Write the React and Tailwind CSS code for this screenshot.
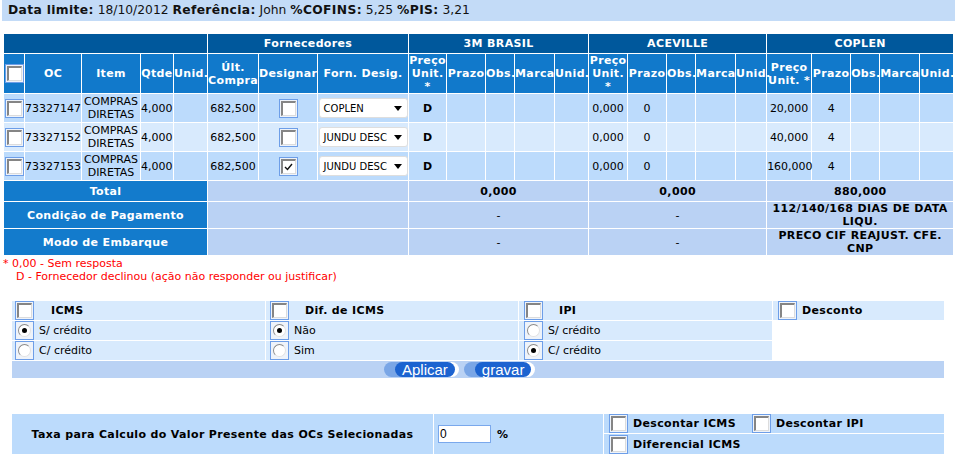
import React from 'react';

const COLS = [21, 57, 59, 33, 34, 51, 59, 91, 38, 39, 29, 40, 34, 39, 39, 29, 40, 31, 45, 39, 29, 40, 34];

const ROWS = [
  { oc: '73327147', forn: 'COPLEN', designar: false, ace: '0,000', cop: '20,000', bg: 'bg-[#bcdbfc]' },
  { oc: '73327152', forn: 'JUNDU DESC', designar: false, ace: '0,000', cop: '40,000', bg: 'bg-[#d8eafd]' },
  { oc: '73327153', forn: 'JUNDU DESC', designar: true, ace: '0,000', cop: '160,000', bg: 'bg-[#bcdbfc]' },
];

const DOTS = 'bg-[#b8d2f4] bg-[conic-gradient(#a9c6ef_25%,#cadef8_0_50%,#a9c6ef_0_75%,#cadef8_0)] bg-[length:2px_2px]';

function Check({ checked }) {
  return (
    <span className="inline-flex w-[19px] h-[19px] shrink-0 items-center justify-center border border-[#6d9ee8] bg-[#eef3fa] align-middle">
      <span className="flex w-[15px] h-[15px] items-center justify-center bg-white border-t-2 border-l-2 border-r border-b border-t-[#858585] border-l-[#858585] border-r-[#dcdcdc] border-b-[#dcdcdc]">
        {checked && (
          <svg width="9" height="8" viewBox="0 0 9 8">
            <path d="M1 4 L3.5 6.5 L8 1" fill="none" stroke="#111" strokeWidth="1.4" />
          </svg>
        )}
      </span>
    </span>
  );
}

function Radio({ checked }) {
  return (
    <span className="inline-flex w-[19px] h-[19px] shrink-0 items-center justify-center border border-[#6d9ee8] bg-[#eef3fa] align-middle">
      <span className="flex w-[13px] h-[13px] items-center justify-center rounded-full bg-white border border-t-[#8a8a8a] border-l-[#8a8a8a] border-r-[#e2e2e2] border-b-[#e2e2e2]">
        {checked && <span className="w-[5px] h-[5px] rounded-full bg-black" />}
      </span>
    </span>
  );
}

function FakeSelect({ value }) {
  return (
    <div className="mx-auto flex w-[89px] h-[20px] items-center justify-between rounded-[3px] border border-[#dedede] bg-white pl-[4px] pr-[5px] text-[10px] text-black">
      <span>{value}</span>
      <svg width="8" height="5" viewBox="0 0 8 5"><path d="M0 0 H8 L4 5 Z" fill="#000" /></svg>
    </div>
  );
}

function Pill({ label }) {
  return (
    <span className="inline-flex h-[15px] items-center rounded-full bg-[linear-gradient(90deg,#7aa6e6_55%,#ffffff_55%)] pl-[11px] pr-[4px]">
      <span className="flex h-[15px] items-center rounded-full bg-[#1c63d0] px-[7px] font-['Liberation_Sans',Arial,sans-serif] text-[15px] leading-[15px] text-white">
        {label}
      </span>
    </span>
  );
}

export default function App() {
  const th2 = 'border border-white bg-[#1179cb] text-white font-bold tracking-[0.35px] text-center align-middle p-0 leading-[13px]';
  const td = 'border border-white p-0 align-middle';
  const B = 'font-bold tracking-[0.35px]';
  return (
    <div className="min-h-[458px] bg-white font-['DejaVu_Sans',Verdana,sans-serif] text-[11px] leading-[13px] text-black">
      <div className="ml-[2px] flex h-[21px] w-[953px] items-center bg-[#c3dbf7] pl-[6px] text-[12.3px] text-[#111]">
        <span>
          <span className={B}>Data limite:</span> 18/10/2012 <span className={B}>Referência:</span> John <span className={B}>%COFINS:</span> 5,25 <span className={B}>%PIS:</span> 3,21
        </span>
      </div>

      <table className="ml-[3px] mt-[12px] w-[950px] table-fixed border-collapse">
        <colgroup>
          {COLS.map((w, i) => <col key={i} style={{ width: w }} />)}
        </colgroup>
        <thead>
          <tr className="h-[20px] bg-[#00589c] text-white font-bold tracking-[0.35px]">
            <th colSpan={5} className="border border-white" />
            <th colSpan={3} className="border border-white text-center">Fornecedores</th>
            <th colSpan={5} className="border border-white text-center">3M BRASIL</th>
            <th colSpan={5} className="border border-white text-center">ACEVILLE</th>
            <th colSpan={5} className="border border-white text-center">COPLEN</th>
          </tr>
          <tr className="h-[40px]">
            <th className={th2}><Check /></th>
            <th className={th2}>OC</th>
            <th className={th2}>Item</th>
            <th className={th2}>Qtde</th>
            <th className={th2}>Unid.</th>
            <th className={th2}>Últ.<br />Compra</th>
            <th className={th2}>Designar</th>
            <th className={th2}>Forn. Desig.</th>
            {['3m', 'ace'].map(g => (
              <React.Fragment key={g}>
                <th className={th2}>Preço<br />Unit.<br />*</th>
                <th className={th2}>Prazo</th>
                <th className={th2}>Obs.</th>
                <th className={th2}>Marca</th>
                <th className={th2}>Unid.</th>
              </React.Fragment>
            ))}
            <th className={th2}>Preço<br />Unit. *</th>
            <th className={th2}>Prazo</th>
            <th className={th2}>Obs.</th>
            <th className={th2}>Marca</th>
            <th className={th2}>Unid.</th>
          </tr>
        </thead>
        <tbody>
          {ROWS.map(r => (
            <tr key={r.oc} className={`h-[29px] ${r.bg}`}>
              <td className={`${td} text-center`}><Check /></td>
              <td className={`${td} text-left`}>{r.oc}</td>
              <td className={`${td} text-center`}>COMPRAS<br />DIRETAS</td>
              <td className={`${td} text-left`}>4,000</td>
              <td className={td} />
              <td className={`${td} text-center`}>682,500</td>
              <td className={`${td} text-center`}><Check checked={r.designar} /></td>
              <td className={td}><FakeSelect value={r.forn} /></td>
              <td className={`${td} text-center font-bold`}>D</td>
              <td className={td} />
              <td className={td} />
              <td className={td} />
              <td className={td} />
              <td className={`${td} text-center`}>{r.ace}</td>
              <td className={`${td} text-center`}>0</td>
              <td className={td} />
              <td className={td} />
              <td className={td} />
              <td className={`${td} text-center`}>{r.cop}</td>
              <td className={`${td} text-center`}>4</td>
              <td className={td} />
              <td className={td} />
              <td className={td} />
            </tr>
          ))}
          <tr className="h-[21px] font-bold tracking-[0.35px]">
            <td colSpan={5} className={`${td} bg-[#137bcc] text-center text-white`}>Total</td>
            <td colSpan={3} className={`${td} ${DOTS}`} />
            <td colSpan={5} className={`${td} ${DOTS} text-center`}>0,000</td>
            <td colSpan={5} className={`${td} ${DOTS} text-center`}>0,000</td>
            <td colSpan={5} className={`${td} ${DOTS} text-center`}>880,000</td>
          </tr>
          <tr className="h-[27px] font-bold tracking-[0.35px]">
            <td colSpan={5} className={`${td} bg-[#137bcc] text-center text-white`}>Condição de Pagamento</td>
            <td colSpan={3} className={`${td} ${DOTS}`} />
            <td colSpan={5} className={`${td} ${DOTS} text-center font-normal`}>-</td>
            <td colSpan={5} className={`${td} ${DOTS} text-center font-normal`}>-</td>
            <td colSpan={5} className={`${td} ${DOTS} text-center`}>112/140/168 DIAS DE DATA LIQU.</td>
          </tr>
          <tr className="h-[27px] font-bold tracking-[0.35px]">
            <td colSpan={5} className={`${td} bg-[#137bcc] text-center text-white`}>Modo de Embarque</td>
            <td colSpan={3} className={`${td} ${DOTS}`} />
            <td colSpan={5} className={`${td} ${DOTS} text-center font-normal`}>-</td>
            <td colSpan={5} className={`${td} ${DOTS} text-center font-normal`}>-</td>
            <td colSpan={5} className={`${td} ${DOTS} text-center`}>PRECO CIF REAJUST. CFE. CNP</td>
          </tr>
        </tbody>
      </table>

      <div className="ml-[3px] mt-[1px] text-[#ff0000]">
        <p>* 0,00 - Sem resposta</p>
        <p className="pl-[13px]">D - Fornecedor declinou (ação não responder ou justificar)</p>
      </div>

      {/* Impostos */}
      <table className="ml-[11px] mt-[17px] w-[933px] table-fixed border-collapse">
        <colgroup>
          <col style={{ width: 254 }} />
          <col style={{ width: 253 }} />
          <col style={{ width: 254 }} />
          <col style={{ width: 172 }} />
        </colgroup>
        <tbody>
          <tr className="h-[18px] bg-[#d8eafd] font-bold tracking-[0.35px]">
            <td className={td}><div className="flex items-center pl-[3px]"><Check /><span className="ml-[17px]">ICMS</span></div></td>
            <td className={td}><div className="flex items-center pl-[4px]"><Check /><span className="ml-[16px]">Dif. de ICMS</span></div></td>
            <td className={td}><div className="flex items-center pl-[5px]"><Check /><span className="ml-[16px]">IPI</span></div></td>
            <td className={td}><div className="flex items-center pl-[5px]"><Check /><span className="ml-[5px]">Desconto</span></div></td>
          </tr>
          <tr className="h-[19px]">
            <td className={`${td} bg-[#d8eafd]`}><div className="flex items-center pl-[3px]"><Radio checked /><span className="ml-[5px]">S/ crédito</span></div></td>
            <td className={`${td} bg-[#d8eafd]`}><div className="flex items-center pl-[4px]"><Radio checked /><span className="ml-[5px]">Não</span></div></td>
            <td className={`${td} bg-[#d8eafd]`}><div className="flex items-center pl-[5px]"><Radio /><span className="ml-[5px]">S/ crédito</span></div></td>
            <td className={td} />
          </tr>
          <tr className="h-[19px]">
            <td className={`${td} bg-[#d8eafd]`}><div className="flex items-center pl-[3px]"><Radio /><span className="ml-[5px]">C/ crédito</span></div></td>
            <td className={`${td} bg-[#d8eafd]`}><div className="flex items-center pl-[4px]"><Radio /><span className="ml-[5px]">Sim</span></div></td>
            <td className={`${td} bg-[#d8eafd]`}><div className="flex items-center pl-[5px]"><Radio checked /><span className="ml-[5px]">C/ crédito</span></div></td>
            <td className={td} />
          </tr>
          <tr className="h-[18px]">
            <td colSpan={4} className={`${td} ${DOTS}`}>
              <div className="flex items-center pl-[372px] gap-[5px]">
                <Pill label="Aplicar" />
                <Pill label="gravar" />
              </div>
            </td>
          </tr>
        </tbody>
      </table>

      {/* Taxa */}
      <table className="ml-[11px] mt-[34px] w-[933px] table-fixed border-collapse font-bold tracking-[0.35px]">
        <colgroup>
          <col style={{ width: 422 }} />
          <col style={{ width: 170 }} />
          <col style={{ width: 341 }} />
        </colgroup>
        <tbody>
          <tr className="h-[20px] bg-[#bcdbfc]">
            <td rowSpan={2} className={`${td} text-center`}>Taxa para Calculo do Valor Presente das OCs Selecionadas</td>
            <td rowSpan={2} className={td}>
              <div className="flex items-center pl-[4px]">
                <div className="flex h-[18px] w-[53px] items-center border border-[#7aa8ec] bg-white pl-[1px] font-['Liberation_Sans',Arial,sans-serif] text-[12px] font-normal tracking-normal">0</div>
                <span className="ml-[6px]">%</span>
              </div>
            </td>
            <td className={td}>
              <div className="flex items-center pl-[5px]">
                <Check /><span className="ml-[5px]">Descontar ICMS</span>
                <span className="ml-[16px]"><Check /></span><span className="ml-[5px]">Descontar IPI</span>
              </div>
            </td>
          </tr>
          <tr className="h-[21px] bg-[#bcdbfc]">
            <td className={td}>
              <div className="flex items-center pl-[5px]">
                <Check /><span className="ml-[5px]">Diferencial ICMS</span>
              </div>
            </td>
          </tr>
        </tbody>
      </table>
    </div>
  );
}
